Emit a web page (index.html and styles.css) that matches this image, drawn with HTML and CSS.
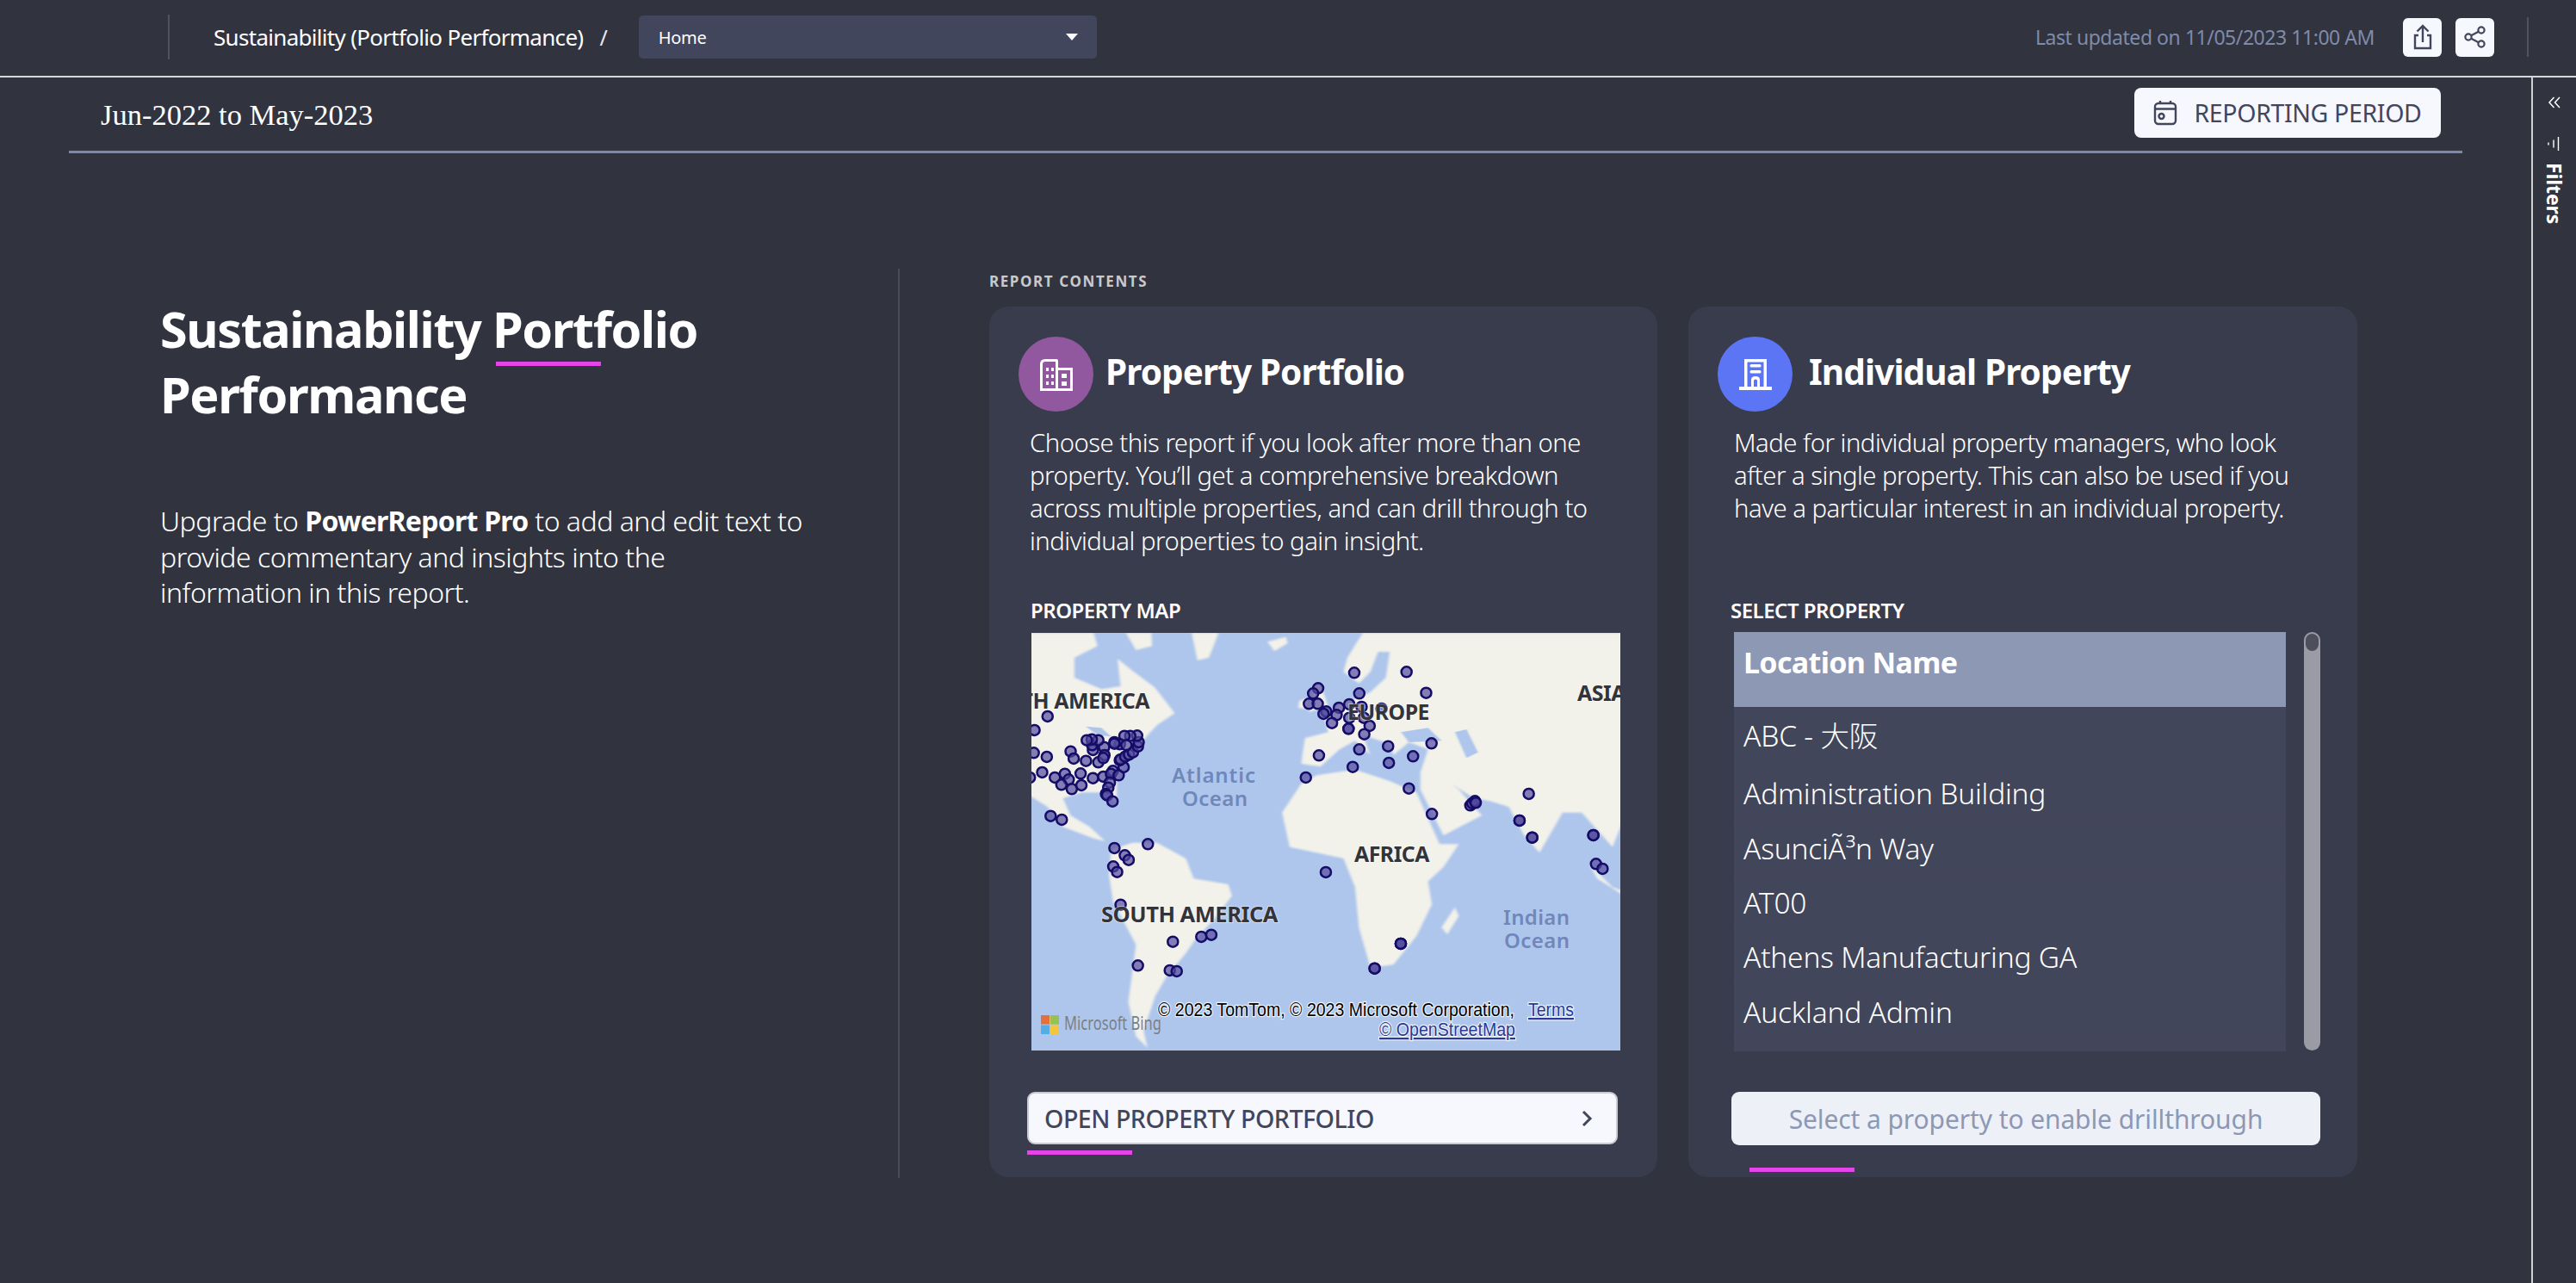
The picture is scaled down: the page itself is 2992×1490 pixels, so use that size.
FILE: index.html
```html
<!DOCTYPE html>
<html lang="en">
<head>
<meta charset="utf-8">
<title>Sustainability (Portfolio Performance)</title>
<link rel="stylesheet" href="styles.css">
</head>
<body>
<header class="topbar">
  <span class="vrule"></span>
  <span class="crumb">Sustainability (Portfolio Performance)</span>
  <span class="slash">/</span>
  <div class="select"><span>Home</span><i class="caret"></i></div>
  <span class="updated">Last updated on 11/05/2023 11:00 AM</span>
  <button class="iconbtn first" aria-label="Export">
    <svg width="24" height="32" viewBox="0 0 24 32" fill="none" stroke="#42465c" stroke-width="2.4"><path d="M12 22V3M5.5 9.5 12 3l6.500 6.500M7 14H3v15h18V14h-4"/></svg>
  </button>
  <button class="iconbtn" aria-label="Share">
    <svg width="26" height="26" viewBox="0 0 26 26" fill="none" stroke="#42465c" stroke-width="2.2"><circle cx="20" cy="5" r="3.600"/><circle cx="20" cy="21" r="3.600"/><circle cx="5" cy="13" r="3.600"/><path d="m8.200 11.300 8.600-4.600M8.200 14.700l8.600 4.600"/></svg>
  </button>
  <span class="vrule end"></span>
</header>

<div class="workspace">
  <main class="report">
    <div class="period">
      <span class="dates">Jun-2022 to May-2023</span>
      <button class="periodbtn">
        <svg width="28" height="30" viewBox="0 0 28 30" fill="none" stroke="#42465c" stroke-width="2.400"><rect x="2" y="4" width="24" height="24" rx="4"/><path d="M2 10.500h24M8 1v4M20 1v4"/><circle cx="9.500" cy="19" r="3"/></svg>
        REPORTING PERIOD
      </button>
    </div>

    <div class="columns">
      <section class="intro">
        <h1>Sustainability <span class="mark">Portfolio</span> Performance</h1>
        <p>Upgrade to <b>PowerReport Pro</b> to add and edit text to<br>provide commentary and insights into the<br>information in this report.</p>
      </section>

      <section class="contents">
        <h2>REPORT CONTENTS</h2>
        <div class="cards">
          <article class="card">
            <div class="cardhead">
              <span class="badge purple">
                <svg width="40" height="40" viewBox="0 0 40 40" fill="#fff"><path fill-rule="evenodd" d="M1 39V8q0-6 6-6h13q2 0 2 2v8h17v27zM4 36h15V5H7q-3 0-3 3zm18 0h14V15H22z"/><g><rect x="8" y="12" width="3" height="4"/><rect x="14" y="12" width="3" height="4"/><rect x="8" y="20" width="3" height="4"/><rect x="14" y="20" width="3" height="4"/><rect x="8" y="28" width="3" height="4"/><rect x="14" y="28" width="3" height="4"/><rect x="26" y="19" width="6" height="5"/><rect x="26" y="28" width="6" height="5"/></g></svg>
              </span>
              <h3>Property Portfolio</h3>
            </div>
            <p class="desc">Choose this report if you look after more than one property. You’ll get a comprehensive breakdown across multiple properties, and can drill through to individual properties to gain insight.</p>
            <h4 class="label">PROPERTY MAP</h4>
            <div class="map">
              <svg width="684" height="485" viewBox="0 0 684 485">
                <defs>
                  <ellipse id="d" class="dot" rx="13.500" ry="18"/>
                </defs>
                <rect width="684" height="485" class="sea"/>
                <g transform="scale(.4464 .3333) translate(-18 -14)">
                  <g class="land">
                    <path d="M0 14H180L190 60 130 100V170L200 210 250 200 242 104 279 144 339 204 391 294 346 334 332 354 300 400 260 470 240 530 240 610 215 570 150 570 100 590 120 650 170 690 210 740 180 730 100 690 60 620 0 570Z"/>
                    <path d="M264 14H330L332 60 290 74Z"/>
                    <path d="M435 14H505L480 100 450 110Z"/>
                    <path d="M632 45 680 28 685 50 650 78Z"/>
                    <path d="M225 770 280 745H345L420 800 440 870 530 890 540 930 500 1000 440 1090 420 1130 370 1210 340 1280 310 1400 320 1460 290 1420 270 1300 290 1100 230 950 220 860Z"/>
                    <path d="M670 640 720 540 760 510 860 490 950 530 1020 570 1050 660 1080 750 1130 750 1090 830 1050 880 1060 960 1020 1070 960 1170 900 1180 870 1040 860 900 830 800 760 780 690 760Z"/>
                    <path d="M1120 970 1130 1000 1100 1065 1085 1040Z"/>
                    <path d="M1560 14H880L840 100 830 150 870 190 900 150 920 80 950 80 940 170 900 220 870 240 820 260 780 310 790 360 730 380 725 420 720 470 770 480 820 420 860 390 900 440 880 370 950 400 960 440 1000 395 1050 420 1030 500 1030 560 1090 720 1190 650 1130 560 1110 540 1170 590 1210 600 1260 620 1300 720 1340 780 1400 640 1450 640 1490 700 1530 760 1560 660Z"/>
                    <path d="M750 200 770 190 790 270 740 290Z"/>
                    <path d="M715 250 740 240 735 280 712 275Z"/>
                    <path d="M1470 820 1530 900 1560 915 1555 925 1490 870Z"/>
                  </g>
                  <g class="water">
                    <path d="M980 360 1050 345 1085 390 1000 395Z"/>
                    <path d="M1120 360 1150 350 1180 430 1150 450Z"/>
                    <path d="M160 340 200 345 225 375 190 370Z"/>
                  </g>
                  <g>
                    <use href="#d" x="60" y="305"/><use href="#d" x="26" y="353"/><use href="#d" x="24" y="432"/><use href="#d" x="58" y="446"/><use href="#d" x="46" y="500"/><use href="#d" x="14" y="518"/><use href="#d" x="79" y="518"/><use href="#d" x="105" y="505"/><use href="#d" x="115" y="525"/><use href="#d" x="96" y="543"/><use href="#d" x="123" y="558"/><use href="#d" x="148" y="545"/><use href="#d" x="146" y="504"/><use href="#d" x="120" y="427"/><use href="#d" x="128" y="452"/><use href="#d" x="160" y="460"/><use href="#d" x="192" y="465"/><use href="#d" x="178" y="520"/><use href="#d" x="205" y="515"/><use href="#d" x="230" y="495"/><use href="#d" x="225" y="505"/><use href="#d" x="245" y="510"/><use href="#d" x="258" y="482"/><use href="#d" x="248" y="458"/><use href="#d" x="250" y="455"/><use href="#d" x="262" y="445"/><use href="#d" x="272" y="438"/><use href="#d" x="282" y="430"/><use href="#d" x="295" y="410"/><use href="#d" x="297" y="395"/><use href="#d" x="293" y="372"/><use href="#d" x="275" y="373"/><use href="#d" x="260" y="373"/><use href="#d" x="248" y="402"/><use href="#d" x="265" y="405"/><use href="#d" x="234" y="395"/><use href="#d" x="234" y="400"/><use href="#d" x="207" y="412"/><use href="#d" x="208" y="440"/><use href="#d" x="205" y="450"/><use href="#d" x="178" y="422"/><use href="#d" x="176" y="405"/><use href="#d" x="192" y="388"/><use href="#d" x="175" y="385"/><use href="#d" x="162" y="388"/><use href="#d" x="222" y="535"/><use href="#d" x="218" y="553"/><use href="#d" x="212" y="575"/><use href="#d" x="215" y="580"/><use href="#d" x="229" y="601"/><use href="#d" x="68" y="652"/><use href="#d" x="97" y="665"/>
                    <use href="#d" x="234" y="764"/><use href="#d" x="321" y="750"/><use href="#d" x="261" y="789"/><use href="#d" x="271" y="805"/><use href="#d" x="231" y="828"/><use href="#d" x="241" y="847"/><use href="#d" x="250" y="961"/><use href="#d" x="386" y="1090"/><use href="#d" x="460" y="1073"/><use href="#d" x="486" y="1066"/><use href="#d" x="295" y="1173"/><use href="#d" x="378" y="1190"/><use href="#d" x="396" y="1193"/>
                    <use href="#d" x="858" y="153"/><use href="#d" x="994" y="150"/><use href="#d" x="871" y="225"/><use href="#d" x="1045" y="223"/><use href="#d" x="764" y="207"/><use href="#d" x="751" y="225"/><use href="#d" x="740" y="261"/><use href="#d" x="763" y="261"/><use href="#d" x="818" y="275"/><use href="#d" x="845" y="263"/><use href="#d" x="877" y="272"/><use href="#d" x="929" y="278"/><use href="#d" x="785" y="288"/><use href="#d" x="778" y="296"/><use href="#d" x="812" y="300"/><use href="#d" x="845" y="310"/><use href="#d" x="883" y="310"/><use href="#d" x="800" y="328"/><use href="#d" x="898" y="338"/><use href="#d" x="843" y="348"/><use href="#d" x="843" y="348"/><use href="#d" x="884" y="367"/><use href="#d" x="946" y="409"/><use href="#d" x="1059" y="399"/><use href="#d" x="1011" y="444"/><use href="#d" x="871" y="420"/><use href="#d" x="766" y="441"/><use href="#d" x="854" y="481"/><use href="#d" x="948" y="467"/><use href="#d" x="732" y="518"/><use href="#d" x="1000" y="556"/><use href="#d" x="1060" y="645"/>
                    <use href="#d" x="1160" y="615"/><use href="#d" x="1165" y="608"/><use href="#d" x="1172" y="600"/><use href="#d" x="1174" y="606"/><use href="#d" x="1312" y="575"/><use href="#d" x="1288" y="668"/><use href="#d" x="1288" y="668"/><use href="#d" x="1321" y="727"/><use href="#d" x="1321" y="727"/><use href="#d" x="1480" y="719"/><use href="#d" x="1480" y="719"/><use href="#d" x="1487" y="819"/><use href="#d" x="1504" y="836"/><use href="#d" x="784" y="848"/><use href="#d" x="979" y="1097"/><use href="#d" x="979" y="1097"/><use href="#d" x="979" y="1097"/><use href="#d" x="911" y="1183"/><use href="#d" x="911" y="1183"/>
                  </g>
                </g>
                <text class="place" x="137" y="88" text-anchor="end">NORTH AMERICA</text>
                <text class="place" x="367" y="101" textLength="95" lengthAdjust="spacingAndGlyphs">EUROPE</text>
                <text class="place" x="634" y="79">ASIA</text>
                <text class="place" x="375" y="266" textLength="87" lengthAdjust="spacingAndGlyphs">AFRICA</text>
                <text class="place" x="81" y="336" textLength="205" lengthAdjust="spacingAndGlyphs">SOUTH AMERICA</text>
                <text class="ocean" x="163" y="174" textLength="97">Atlantic</text>
                <text class="ocean" x="175" y="201" textLength="76">Ocean</text>
                <text class="ocean" x="548" y="339" textLength="77">Indian</text>
                <text class="ocean" x="549" y="366" textLength="76">Ocean</text>
                <g>
                  <rect x="11" y="444" width="10" height="10.500" fill="#e5703a"/>
                  <rect x="22" y="444" width="10" height="10.500" fill="#96c24e"/>
                  <rect x="11" y="455.500" width="10" height="10.500" fill="#53aee8"/>
                  <rect x="22" y="455.500" width="10" height="10.500" fill="#f5c53d"/>
                </g>
                <text class="bing" x="38" y="461" textLength="113" lengthAdjust="spacingAndGlyphs">Microsoft Bing</text>
                <text class="credit" x="147" y="445" textLength="414" lengthAdjust="spacingAndGlyphs">© 2023 TomTom, © 2023 Microsoft Corporation,</text>
                <text class="credit link" x="577" y="445" textLength="53" lengthAdjust="spacingAndGlyphs">Terms</text>
                <text class="credit link" x="404" y="468" textLength="158" lengthAdjust="spacingAndGlyphs">© OpenStreetMap</text>
              </svg>
            </div>
            <button class="action">OPEN PROPERTY PORTFOLIO
              <svg width="14" height="20" viewBox="0 0 14 20" fill="none" stroke="#42465c" stroke-width="3"><path d="m3 2 8 8-8 8"/></svg>
            </button>
            <span class="accent"></span>
          </article>

          <article class="card second">
            <div class="cardhead">
              <span class="badge blue">
                <svg width="40" height="40" viewBox="0 0 40 40" fill="#fff"><path fill-rule="evenodd" d="M7 2H33V34H39V38H1V34H7ZM10.500 5.500V34H15V26Q15 22 20 22 25 22 25 26V34H29.500V5.500ZM18 34H22V27Q22 25.500 20 25.500 18 25.500 18 27Z"/><rect x="13.500" y="8" width="13" height="3.600" rx="1.500"/><rect x="13.500" y="15" width="13" height="3.600" rx="1.500"/></svg>
              </span>
              <h3>Individual Property</h3>
            </div>
            <p class="desc">Made for individual property managers, who look after a single property. This can also be used if you have a particular interest in an individual property.</p>
            <h4 class="label">SELECT PROPERTY</h4>
            <div class="picker">
              <div class="table">
                <div class="th">Location Name</div>
                <div class="tr tall">ABC - 大阪</div>
                <div class="tr">Administration Building</div>
                <div class="tr">AsunciÃ³n Way</div>
                <div class="tr">AT00</div>
                <div class="tr">Athens Manufacturing GA</div>
                <div class="tr">Auckland Admin</div>
              </div>
              <div class="scroll"><span class="thumb"></span></div>
            </div>
            <button class="action off">Select a property to enable drillthrough</button>
            <span class="accent"></span>
          </article>
        </div>
      </section>
    </div>
  </main>

  <aside class="filters">
    <svg width="14" height="14" viewBox="0 0 14 14" fill="none" stroke="#fff" stroke-width="1.500"><path d="M6.500 1 1 7l5.500 6M13 1 7.500 7l5.500 6"/></svg>
    <svg class="funnel" width="14" height="16" viewBox="0 0 14 16" fill="none" stroke="#fff" stroke-width="1.400"><path d="M12.500 0v16M7 3.500v9M1 6.500v3"/></svg>
    <span class="ftext">Filters</span>
  </aside>
</div>
</body>
</html>
```

FILE: styles.css
```css
* { box-sizing: border-box; }
html, body { margin: 0; height: 100%; }
body {
  width: 2992px; height: 1490px; overflow: hidden;
  background: #31333f; color: #fff;
  font-family: "Noto Sans", "Noto Sans CJK JP", sans-serif;
  font-stretch: 87.5%;
}
button { font-family: inherit; font-stretch: inherit; border: 0; padding: 0; }

/* top bar */
.topbar {
  height: 90px; padding: 0 0 2px 195px;
  display: flex; align-items: center;
  border-bottom: 2px solid #d5d6da;
}
.vrule { width: 2px; height: 52px; background: #50525e; }
.crumb { margin-left: 51px; font-size: 26px; font-weight: 400; letter-spacing: -.7px; color: #fff; white-space: nowrap; }
.slash { margin-left: 19px; font-size: 25px; color: #e8e8ee; }
.select {
  margin-left: 36px; width: 532px; height: 50px; padding: 0 22px 0 23px;
  background: #42465c; border-radius: 5px;
  display: flex; align-items: center; justify-content: space-between;
  font-size: 20px; letter-spacing: -.3px;
}
.caret { width: 0; height: 0; border: 7px solid transparent; border-top: 8px solid #fff; border-bottom: 0; }
.updated { margin-left: auto; font-size: 23px; letter-spacing: -.45px; color: #7f8ba8; white-space: nowrap; }
.iconbtn {
  width: 45px; height: 45px; margin-left: 16px;
  background: #f7f8fe; border-radius: 6px;
  display: flex; align-items: center; justify-content: center;
}
.iconbtn.first { margin-left: 33px; }
.vrule.end { margin: 0 55px 0 38px; height: 46px; }

/* workspace */
.workspace { display: flex; height: 1400px; }
.report { width: 2940px; flex: none; }
.filters {
  flex: 1; border-left: 2px solid #cfd0d5;
  display: flex; flex-direction: column; align-items: center;
  padding-top: 22px;
}
.funnel { margin-top: 33px; margin-left: -2px; }
.ftext { margin-top: 14px; writing-mode: vertical-rl; font-size: 23px; font-weight: 700; letter-spacing: -.1px; }

/* period row */
.period {
  height: 88px; margin: 0 80px; padding: 12px 25px 0 37px;
  display: flex; justify-content: space-between; align-items: flex-start;
  border-bottom: 3px solid #7b88a8;
}
.dates { margin-top: 12px; font-family: "Liberation Serif", serif; font-size: 34.500px; white-space: nowrap; }
.periodbtn {
  width: 356px; height: 58px; border-radius: 8px;
  background: #f7f8fe; color: #42465c;
  display: flex; align-items: center; justify-content: center; gap: 19px;
  font-size: 28.500px; letter-spacing: -.35px;
}

/* body columns */
.columns { display: flex; padding: 134px 0 0 186px; }
.intro { width: 859px; height: 1056px; border-right: 2px solid #494b57; padding-top: 32px; flex: none; }
.intro h1 { margin: 0; width: 680px; font-size: 57.500px; line-height: 76px; font-weight: 700; letter-spacing: -1.4px; }
.mark { position: relative; }
.mark::after {
  content: ""; position: absolute; left: 4px; top: 77px;
  width: 122px; height: 5px; background: #e545e8;
}
.intro p { margin: 88px 0 0; width: 780px; font-size: 32px; line-height: 41.500px; font-weight: 300; letter-spacing: -.5px; white-space: nowrap; }
.intro p b { font-weight: 700; letter-spacing: -.75px; }

.contents { margin-left: 104px; }
.contents h2 { margin: 4px 0 0; font-size: 17px; line-height: 22px; font-weight: 700; letter-spacing: 1.600px; color: #c8c9ce; }
.cards { display: flex; gap: 36px; margin-top: 18px; }
.card {
  width: 776px; height: 1011px; padding: 35px 0 0 34px;
  background: #393c4d; border-radius: 22px;
  display: flex; flex-direction: column;
}
.card.second { width: 777px; }
.cardhead { display: flex; align-items: center; gap: 14px; }
.second .cardhead { gap: 19px; }
.badge { width: 87px; height: 87px; border-radius: 50%; display: flex; align-items: center; justify-content: center; flex: none; }
.purple { background: #92589f; }
.blue { background: #5b75f5; }
.cardhead h3 { margin: 0 0 6px; font-size: 40.500px; font-weight: 700; letter-spacing: -.9px; white-space: nowrap; }
.desc { margin: 17px 0 0 13px; width: 660px; height: 153px; font-size: 29.300px; line-height: 38px; font-weight: 300; letter-spacing: -.5px; }
.second .desc { margin-left: 19px; }
.label { margin: 48px 0 0 14px; height: 26px; font-size: 24px; line-height: 26px; font-weight: 600; letter-spacing: -.5px; white-space: nowrap; }
.second .label { margin-left: 15px; }

/* map */
.map { margin: 13px 0 0 15px; width: 684px; height: 485px; overflow: hidden; }
.map svg { display: block; font-stretch: 100%; }
.sea { fill: #aec6ec; }
.land { fill: #f2f1ea; filter: blur(3px); }
.water { fill: #aec6ec; filter: blur(2px); }
.dot { fill: rgba(84,76,160,.7); stroke: #140c66; stroke-width: 2.500px; vector-effect: non-scaling-stroke; }
.place { font-size: 25px; font-weight: 700; letter-spacing: -.5px; fill: #33343a; stroke: #fff; stroke-width: 2px; stroke-opacity: .45; paint-order: stroke; }
.ocean { font-size: 24px; font-weight: 600; fill: #6f87ba; }
.bing { font-size: 21px; fill: #7b7f86; }
.credit { font-family: "Liberation Sans", sans-serif; font-size: 22px; fill: #000; stroke: #fff; stroke-width: 2.500px; stroke-opacity: .75; paint-order: stroke; }
.link { fill: #2a3a96; text-decoration: underline; }

/* buttons */
.action {
  margin: 48px 0 0 10px; width: 686px; height: 61px; padding: 0 27px 0 18px;
  background: #f7f8fe; color: #42465c; border: 2px solid #c9cad2; border-radius: 9px;
  display: flex; align-items: center; justify-content: space-between;
  font-size: 28.600px; font-weight: 500; letter-spacing: -.5px; flex: none;
}
.accent { margin: 7px 0 0 10px; width: 122px; height: 5px; background: #e545e8; }
.action.off {
  margin: 47px 0 0 16px; width: 684px; height: 62px; padding: 0;
  background: #edf0f7; color: #8c98b4; border: 0;
  justify-content: center; font-size: 30px; letter-spacing: -.1px; font-weight: 400;
}
.second .accent { margin: 26px 0 0 37px; }

/* picker */
.picker { margin: 12px 0 0 19px; display: flex; gap: 21px; }
.table { width: 641px; height: 487px; background: #42465a; overflow: hidden; }
.th { height: 87px; padding: 16px 11px; background: #8c98b4; font-size: 34px; line-height: 38px; font-weight: 700; letter-spacing: -.65px; }
.tr { height: 63.400px; padding: 0 11px; display: flex; align-items: center; font-size: 33.500px; font-weight: 300; letter-spacing: -.2px; border-bottom: 1px solid #45465b; white-space: nowrap; }
.tr.tall { height: 69px; padding-bottom: 6px; border: 0; }
.scroll { width: 19px; height: 486px; background: #9a9ba4; border-radius: 10px; padding: 2px; }
.thumb { display: block; height: 20px; background: #4d505c; border-radius: 8px; }
```
